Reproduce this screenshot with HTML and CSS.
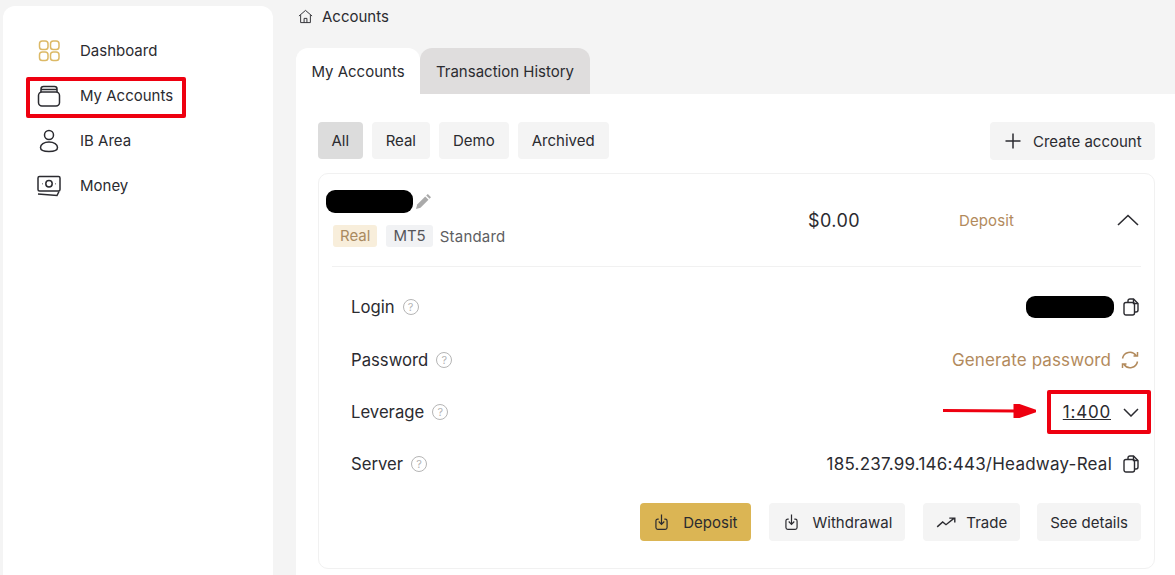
FILE: index.html
```html
<!DOCTYPE html>
<html lang="en">
<head>
  <meta charset="UTF-8" />
  <title>Accounts</title>
  <meta name="viewport" content="width=device-width, initial-scale=1.0" />
  <link rel="stylesheet" href="styles.css">
</head>
<body>
  <aside class="sidebar">
    <nav class="nav">
      <a class="nav-item">
        <svg class="nav-icon gold" viewBox="0 0 24 24"><rect x="2.500" y="2" width="8.500" height="8.500" rx="2.800"/><rect x="13.500" y="2" width="8.500" height="8.500" rx="2.800"/><rect x="2.500" y="13" width="8.500" height="8.500" rx="2.800"/><rect x="13.500" y="13" width="8.500" height="8.500" rx="2.800"/></svg>
        <span>Dashboard</span>
      </a>
      <a class="nav-item">
        <svg class="nav-icon" viewBox="0 0 24 24"><rect x="1.500" y="8" width="21" height="14" rx="3.500"/><path d="M4 8V5q0-2.500 2.500-2.500h11q2.500 0 2.500 2.500v3M4.500 5.500h15"/></svg>
        <span>My Accounts</span>
      </a>
      <a class="nav-item">
        <svg class="nav-icon" viewBox="0 0 24 24"><circle cx="12" cy="6" r="4.500"/><path d="M12 13c-5 0-8.500 2.500-8.500 5.500 0 2.500 2.500 4 8.500 4s8.500-1.500 8.500-4c0-3-3.500-5.500-8.500-5.500z"/></svg>
        <span>IB Area</span>
      </a>
      <a class="nav-item">
        <svg class="nav-icon" viewBox="0 0 24 24"><rect x="1" y="2.500" width="22" height="14.500" rx="1.500"/><circle cx="12" cy="9.700" r="3.200"/><path d="M1 20l19 1.500 2-4M5 9.700h.5M18.500 9.700h.5"/></svg>
        <span>Money</span>
      </a>
    </nav>
  </aside>

  <main class="main">
    <div class="breadcrumb">
      <svg class="crumb-icon" viewBox="0 0 16 16"><path d="M1 7.500 8 1.500l7 6M2.800 6.500V14.500h10.400V6.500M6.500 14.500V10h3v4.500"/></svg>
      <span>Accounts</span>
    </div>

    <div class="tabs">
      <div class="tab active">My Accounts</div>
      <div class="tab">Transaction History</div>
    </div>

    <section class="panel">
      <div class="toolbar">
        <div class="filters">
          <button class="filter selected">All</button>
          <button class="filter">Real</button>
          <button class="filter">Demo</button>
          <button class="filter">Archived</button>
        </div>
        <button class="create">
          <svg class="plus" viewBox="0 0 16 16"><path d="M8 0.500v15M0.500 8h15"/></svg>
          Create account
        </button>
      </div>

      <div class="card">
        <div class="card-head">
          <div class="head-left">
            <div class="name-line">
              <span class="redacted name-blob"></span>
              <svg class="pencil" viewBox="0 0 17 17"><path d="M1 16l1.200-4.500 8-8 3.300 3.300-8 8z"/><path d="M11.200 2.500 12.800 1 16 4.200l-1.500 1.600z"/></svg>
            </div>
            <div class="tags">
              <span class="tag tag-real">Real</span>
              <span class="tag tag-mt">MT5</span>
              <span class="tag-plain">Standard</span>
            </div>
          </div>
          <div class="balance">$0.00</div>
          <div class="head-deposit">Deposit</div>
          <svg class="chevron-up" viewBox="0 0 22 12"><path d="M1 11 11 1.500 21 11"/></svg>
        </div>

        <div class="rows">
          <div class="row">
            <div class="label">Login <span class="help">?</span></div>
            <div class="value">
              <span class="redacted login-blob"></span>
              <svg class="copy" viewBox="0 0 16 18"><path d="M5 4.500V3q0-2 2-2h3.500L15 5.500V12q0 2-2 2h-1.500"/><path d="M10.500 1v4.500H15"/><rect x="1" y="4.500" width="10.500" height="12.500" rx="2"/></svg>
            </div>
          </div>
          <div class="row">
            <div class="label">Password <span class="help">?</span></div>
            <div class="value gold-text">
              Generate password
              <svg class="refresh" viewBox="0 0 18 18"><path d="M1.500 7.500A7.500 7.500 0 0 1 15 4.500M16.500 1v4h-4M16.500 10.500A7.500 7.500 0 0 1 3 13.500M1.500 17v-4h4"/></svg>
            </div>
          </div>
          <div class="row">
            <div class="label">Leverage <span class="help">?</span></div>
            <div class="value">
              <u class="leverage">1:400</u>
              <svg class="chevron-down" viewBox="0 0 16 9"><path d="M1 1l7 7 7-7"/></svg>
            </div>
          </div>
          <div class="row">
            <div class="label">Server <span class="help">?</span></div>
            <div class="value">
              <span class="server">185.237.99.146:443/Headway-Real</span>
              <svg class="copy" viewBox="0 0 16 18"><path d="M5 4.500V3q0-2 2-2h3.500L15 5.500V12q0 2-2 2h-1.500"/><path d="M10.500 1v4.500H15"/><rect x="1" y="4.500" width="10.500" height="12.500" rx="2"/></svg>
            </div>
          </div>
        </div>

        <div class="actions">
          <button class="action primary">
            <svg class="action-icon" viewBox="0 0 14 18"><path d="M4 6H3q-2 0-2 2v7q0 2 2 2h8q2 0 2-2V8q0-2-2-2h-1M7 1v10M4 8.500 7 11.500l3-3"/></svg>
            Deposit
          </button>
          <button class="action">
            <svg class="action-icon" viewBox="0 0 14 18"><path d="M4 6H3q-2 0-2 2v7q0 2 2 2h8q2 0 2-2V8q0-2-2-2h-1M7 1v10M4 8.500 7 11.500l3-3"/></svg>
            Withdrawal
          </button>
          <button class="action trade">
            <svg class="trend" viewBox="0 0 18 10"><path d="M1 9l5-4.500 3 2.500 7.500-6M12 1h5v4"/></svg>
            Trade
          </button>
          <button class="action details">See details</button>
        </div>
      </div>
    </section>
  </main>

  <!-- red marks drawn over the screenshot -->
  <div class="mark mark-nav"></div>
  <div class="mark mark-leverage"></div>
  <svg class="mark-arrow" viewBox="0 0 94 14"><path d="M1 6.500 74 7" /><polygon points="73,0 93,7 73,14"/></svg>
</body>
</html>
```

FILE: styles.css
```css
* {
  box-sizing: border-box;
}
html, body {
  height: 100%;
}
body {
  margin: 0;
  display: flex;
  overflow: hidden;
  background: #f4f4f4;
  color: #2b2b30;
  font-family: "Inter", "Liberation Sans", sans-serif;
  font-size: 15px;
}
svg {
  fill: none;
  stroke: currentColor;
  stroke-width: 1.5;
  flex: none;
}
button {
  font: inherit;
  color: inherit;
  border: 0;
  cursor: pointer;
}

/* sidebar */
.sidebar {
  width: 270px;
  margin: 6px 0 0 3px;
  padding-top: 22px;
  background: #fff;
  border-radius: 12px 12px 0 0;
  flex: none;
}
.nav-item {
  display: flex;
  align-items: center;
  gap: 19px;
  height: 45px;
  padding-left: 34px;
}
.nav-icon {
  width: 24px;
  height: 24px;
}
.gold {
  color: #dcb966;
}

/* main column */
.main {
  flex: 1;
  margin-left: 23px;
  min-width: 0;
}
.breadcrumb {
  display: flex;
  align-items: center;
  gap: 9px;
  height: 33px;
  padding-left: 2px;
  margin-bottom: 15px;
}
.crumb-icon {
  width: 15px;
  height: 15px;
  stroke-width: 1;
}
.tabs {
  display: flex;
}
.tab {
  height: 46px;
  width: 170px;
  display: flex;
  align-items: center;
  justify-content: center;
  background: #dfdddd;
  border-radius: 12px 12px 0 0;
}
.tab.active {
  width: 124px;
  background: #fff;
}
.panel {
  background: #fff;
  padding: 28px 20px 0 22px;
  height: 481px;
}
.toolbar {
  display: flex;
  justify-content: space-between;
  margin-bottom: 13px;
}
.filters {
  display: flex;
  gap: 9px;
}
.filter {
  height: 37px;
  padding: 0 14px;
  background: #f4f4f4;
  border-radius: 4px;
}
.filter.selected {
  padding: 0 13.500px;
  background: #dcdcdc;
}
.create {
  display: flex;
  align-items: center;
  gap: 12px;
  width: 165px;
  height: 38px;
  padding: 0 15px;
  background: #f4f4f4;
  border-radius: 4px;
  white-space: nowrap;
}
.plus {
  width: 16px;
  height: 16px;
}

/* account card */
.card {
  height: 396px;
  padding: 0 13px;
  border: 1px solid #f1f1f1;
  border-radius: 10px;
}
.card-head {
  display: grid;
  grid-template-columns: 476px 151px 158px 22px;
  align-items: center;
  height: 93px;
  border-bottom: 1px solid #f1f1f1;
}
.head-left {
  margin-top: -4px;
}
.name-line {
  display: flex;
  align-items: center;
  gap: 2px;
  margin-left: -6px;
  height: 24px;
}
.redacted {
  display: block;
  background: #000;
  border-radius: 9px;
}
.name-blob {
  width: 87px;
  height: 23px;
}
.login-blob {
  width: 88px;
  height: 22px;
}
.pencil {
  width: 17px;
  height: 17px;
  fill: #aaa;
  stroke: none;
}
.tags {
  display: flex;
  align-items: center;
  gap: 9px;
  margin: 12px 0 0 1px;
}
.tag {
  height: 22px;
  line-height: 22px;
  padding: 0 7px;
  border-radius: 3px;
}
.tag-real {
  background: #f8eedb;
  color: #a98a5f;
}
.tag-mt {
  background: #f1f2f4;
  color: #55555a;
}
.tag-plain {
  margin-left: -2px;
  color: #5e5e62;
  letter-spacing: 0.2px;
}
.balance {
  font-size: 18px;
  letter-spacing: 0.4px;
}
.head-deposit {
  color: #b28a5c;
  letter-spacing: 0.1px;
}
.chevron-up {
  width: 22px;
  height: 12px;
  stroke-width: 1.6;
}
.rows {
  padding: 14px 2px 13px 19px;
}
.row {
  display: flex;
  align-items: center;
  justify-content: space-between;
  height: 52px;
}
.row:first-child {
  margin-bottom: 1px;
}
.label, .value {
  display: flex;
  align-items: center;
}
.label {
  gap: 8px;
  font-size: 16.700px;
}
.value {
  gap: 9px;
  font-size: 17px;
  letter-spacing: 0.12px;
}
.value > svg {
  margin-left: 2px;
}
.login-blob + svg {
  margin-left: 0;
}
.value > .refresh {
  margin-left: 1px;
}
.leverage {
  letter-spacing: 0.8px;
}
.server {
  letter-spacing: 0.23px;
}
.gold-text {
  color: #b28a5c;
}
.help {
  width: 16px;
  height: 16px;
  border: 1px solid #b5b5b5;
  border-radius: 50%;
  color: #b5b5b5;
  font-size: 11px;
  line-height: 14px;
  text-align: center;
}
.copy {
  width: 16px;
  height: 18px;
  stroke-width: 1.4;
}
.refresh {
  width: 18px;
  height: 18px;
}
.value > .chevron-down {
  width: 16px;
  height: 9px;
  margin: 0 0 0 3px;
}
.actions {
  display: flex;
  justify-content: flex-end;
  gap: 18px;
}
.action {
  display: flex;
  align-items: center;
  gap: 15px;
  height: 38px;
  padding: 0 13px 0 16px;
  background: #f4f4f4;
  border-radius: 4px;
}
.action.primary {
  padding: 0 13px 0 15px;
  background: #dbb554;
}
.action.trade {
  gap: 10px;
  padding: 0 13px;
}
.action.details {
  margin-left: -1px;
  padding: 0 13px;
}
.action-icon {
  width: 13px;
  height: 18px;
  stroke-width: 1.3;
}
.trend {
  width: 20px;
  height: 11px;
  stroke-width: 1.3;
}

/* annotations */
.mark {
  position: absolute;
  border: 4px solid #ee0010;
  border-radius: 2px;
}
.mark-nav {
  left: 26px;
  top: 77px;
  width: 160px;
  height: 41px;
}
.mark-leverage {
  left: 1047px;
  top: 390px;
  width: 104px;
  height: 44px;
}
.mark-arrow {
  position: absolute;
  left: 942px;
  top: 404px;
  width: 94px;
  height: 14px;
  color: #ee0010;
  stroke-width: 3;
  fill: #ee0010;
}
```
